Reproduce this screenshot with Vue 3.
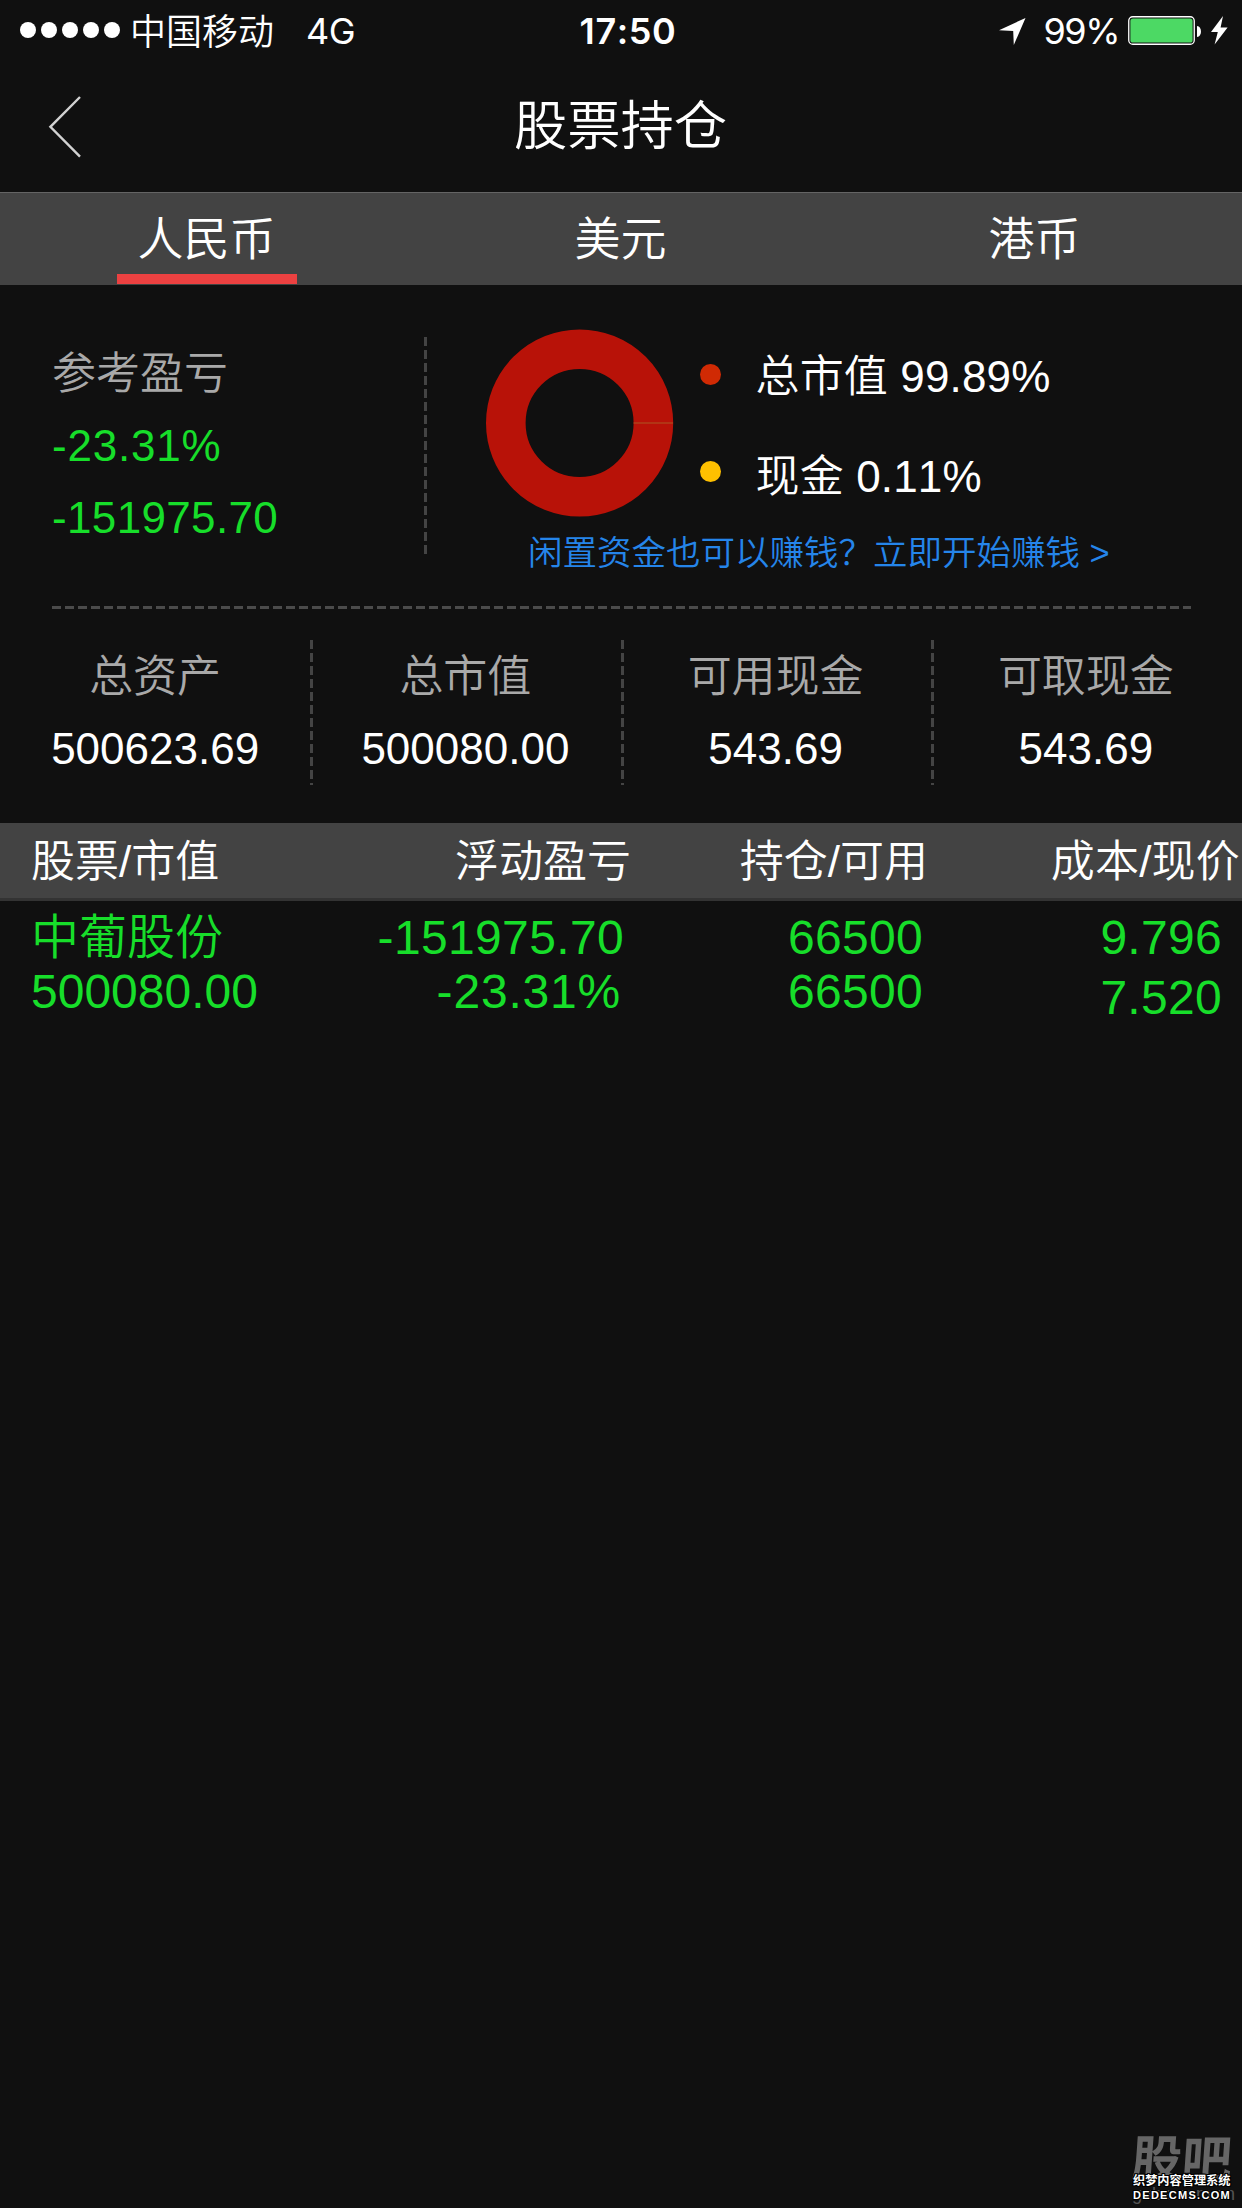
<script setup>
const tabs = [
  { name: '人民币', active: true },
  { name: '美元', active: false },
  { name: '港币', active: false },
]

const legend = [
  { label: '总市值', value: '99.89%', kind: 'stock' },
  { label: '现金', value: '0.11%', kind: 'cash' },
]

const stats = [
  { label: '总资产', value: '500623.69' },
  { label: '总市值', value: '500080.00' },
  { label: '可用现金', value: '543.69' },
  { label: '可取现金', value: '543.69' },
]

const holdings = [
  {
    name: '中葡股份',
    marketValue: '500080.00',
    profit: '-151975.70',
    profitRate: '-23.31%',
    amount: '66500',
    available: '66500',
    cost: '9.796',
    price: '7.520',
  },
]
</script>

<template>
  <div class="screen">
    <header class="status">
      <div class="status-side">
        <span class="signal"><i v-for="n in 5" :key="n"></i></span>
        <span class="carrier">中国移动</span>
        <span class="network">4G</span>
      </div>
      <div class="clock">17:50</div>
      <div class="status-side right">
        <svg class="locate" width="27" height="27" viewBox="0 0 27 27">
          <path d="M26.5 0 L0 12.2 L14.2 13 L14.8 27 Z" fill="#fff" />
        </svg>
        <span class="percent">99%</span>
        <svg class="battery" width="74" height="30" viewBox="0 0 74 30">
          <rect x="0.75" y="0.75" width="65.5" height="27.5" rx="4" fill="none" stroke="#fff" stroke-width="1.3" />
          <rect x="2.4" y="2.4" width="62.2" height="24.2" rx="2.6" fill="#4cd964" />
          <path d="M69 10 C74.3 10.5 74.3 20.5 69 21 Z" fill="#fff" />
        </svg>
        <svg class="bolt" width="17" height="29" viewBox="0 0 17 29">
          <path d="M12 0 L0 16 L6.8 16 L3.6 28.6 L16.6 11.6 L9.6 11.6 Z" fill="#fff" />
        </svg>
      </div>
    </header>

    <nav class="navbar">
      <svg class="back" width="34" height="64" viewBox="0 0 34 64">
        <path d="M32 2 L2.4 31.8 L32 61.6" fill="none" stroke="#d2d2d2" stroke-width="2.4" />
      </svg>
      <h1>股票持仓</h1>
    </nav>

    <div class="tabs">
      <div v-for="tab in tabs" :key="tab.name" class="tab" :class="{ active: tab.active }">
        <span>{{ tab.name }}</span>
      </div>
    </div>

    <section class="overview">
      <div class="profit">
        <div class="label">参考盈亏</div>
        <div class="loss rate">-23.31%</div>
        <div class="loss">-151975.70</div>
      </div>
      <div class="chart">
        <div class="chart-row">
          <svg class="donut" width="188" height="188" viewBox="0 0 188 188">
            <circle cx="93.6" cy="94" r="73.8" fill="none" stroke="#b81208" stroke-width="39.6" />
            <path d="M147.6 94 H187" stroke="#b0401a" stroke-width="1.6" />
          </svg>
          <ul class="legend">
            <li v-for="item in legend" :key="item.label">
              <i :class="item.kind"></i>{{ item.label }} {{ item.value }}
            </li>
          </ul>
        </div>
        <a class="promo">闲置资金也可以赚钱&#xFF1F;立即开始赚钱 &gt;</a>
      </div>
    </section>

    <section class="stats">
      <div v-for="stat in stats" :key="stat.label" class="stat">
        <div class="label">{{ stat.label }}</div>
        <div>{{ stat.value }}</div>
      </div>
    </section>

    <div class="table-head">
      <span class="c1">股票/市值</span>
      <span class="c2">浮动盈亏</span>
      <span class="c3">持仓/可用</span>
      <span class="c4">成本/现价</span>
    </div>
    <div v-for="row in holdings" :key="row.name" class="table-row">
      <div class="c1"><div class="stock-name">{{ row.name }}</div><div>{{ row.marketValue }}</div></div>
      <div class="c2"><div class="loss">{{ row.profit }}</div><div class="loss rate">{{ row.profitRate }}</div></div>
      <div class="c3"><div>{{ row.amount }}</div><div>{{ row.available }}</div></div>
      <div class="c4"><div>{{ row.cost }}</div><div>{{ row.price }}</div></div>
    </div>

    <div class="watermark">
      <div class="brand">股吧</div>
      <div class="domain">guba.com.cn</div>
      <div class="stamp">
        <div class="stamp-cn">织梦内容管理系统</div>
        <div class="stamp-en">DEDECMS.COM</div>
      </div>
    </div>
  </div>
</template>

<style>
body {
  background: #101010;
}
</style>

<style scoped>
.screen {
  position: relative;
  width: 1242px;
  height: 2208px;
  overflow: hidden;
  background: #101010;
  color: #fff;
  font-family: "Liberation Sans", "Noto Sans CJK SC", sans-serif;
  font-size: 44px;
  font-weight: 350;
  font-kerning: none;
  white-space: nowrap;
}

.status {
  display: flex;
  justify-content: space-between;
  height: 62px;
  box-sizing: border-box;
  padding: 0 14px 0 20px;
  line-height: 62px;
  font-family: Inter, "Noto Sans CJK SC", sans-serif;
  font-size: 36px;
}
.status-side {
  display: flex;
  width: 500px;
}
.status-side.right {
  justify-content: flex-end;
}
.signal {
  display: flex;
  gap: 5px;
  margin: 22px 10px 0 0;
}
.signal i {
  width: 16px;
  height: 16px;
  border-radius: 50%;
  background: #fff;
}
.carrier {
  margin-right: 32px;
  line-height: 64px;
}
.network,
.percent {
  font-weight: 400;
}
.network {
  letter-spacing: -0.5px;
}
.clock {
  font-weight: 600;
  letter-spacing: 0.6px;
  margin-left: 8px;
}
.locate {
  margin: 18px 18px 0 0;
}
.percent {
  letter-spacing: -1.5px;
  margin-right: 9px;
}
.battery {
  margin: 16px 9px 0 0;
}
.bolt {
  margin-top: 16px;
}

.navbar {
  display: flex;
  align-items: center;
  height: 130px;
}
.back {
  margin: 0 0 0 48px;
}
.navbar h1 {
  flex: 1;
  margin: 0 83px 0 0;
  text-align: center;
  font-size: 53.3px;
  font-weight: 350;
  line-height: 130px;
}

.tabs {
  display: flex;
  height: 93px;
  box-sizing: border-box;
  border-top: 1px solid #646464;
  background: #434343;
  font-size: 46px;
}
.tab {
  flex: 1;
  display: flex;
  flex-direction: column;
  align-items: center;
  line-height: 92px;
}
.tab span {
  height: 81px;
  margin-right: 1px;
}
.tab.active::after {
  content: "";
  width: 180px;
  height: 10px;
  background: #ec4141;
}

.overview {
  display: flex;
  height: 324px;
  margin: 0 51px 0 52px;
  background: repeating-linear-gradient(90deg, #4b4b4b 0 9px, transparent 9px 13px) bottom / 100% 3px no-repeat;
}
.profit {
  width: 375px;
  height: 217px;
  box-sizing: border-box;
  margin-top: 52px;
  padding-top: 1px;
  line-height: 72px;
  background: repeating-linear-gradient(#444 0 9px, transparent 9px 13px) right / 3px 100% no-repeat;
}
.label {
  color: #a9a9a9;
}
.loss {
  color: #17de2a;
  letter-spacing: 0.35px;
}
.loss.rate {
  letter-spacing: 0.8px;
}
.chart {
  flex: 1;
  padding: 41px 0 0 59px;
}
.chart-row {
  display: flex;
  height: 207px;
}
.donut {
  margin-top: 3px;
}
.legend {
  list-style: none;
  margin: 1px 0 0;
  padding: 0 0 0 26px;
  line-height: 100px;
}
.legend li {
  display: flex;
  align-items: center;
  height: 100px;
  letter-spacing: 0.15px;
}
.legend i {
  width: 21px;
  height: 21px;
  margin: 0 34.5px 5px 0;
  border-radius: 50%;
}
.legend .stock {
  background: #d02a04;
}
.legend .cash {
  margin-bottom: 12px;
  background: #ffc000;
}
.promo {
  display: block;
  margin-left: 42px;
  line-height: 40px;
  font-size: 34.5px;
  color: #2585ea;
}

.stats {
  display: flex;
  height: 145px;
  padding: 31px 1px 38px 0;
  line-height: 72px;
  text-align: center;
}
.stat {
  flex: 1;
  padding-top: 1px;
}
.stat + .stat {
  background: repeating-linear-gradient(#444 0 9px, transparent 9px 13px) left / 3px 100% no-repeat;
}

.table-head,
.table-row {
  display: grid;
  grid-template-columns: 340px 290px 297px 315px;
}
.table-head {
  height: 75px;
  line-height: 77px;
  border-bottom: 3px solid #333;
  background: #434343;
  text-align: right;
}
.table-head .c2,
.table-head .c3 {
  margin-right: -1px;
}
.table-head .c4 {
  padding-right: 2px;
  letter-spacing: 0.2px;
}
.c1 {
  padding-left: 31px;
  text-align: left;
}
.table-row {
  padding-top: 10px;
  font-size: 48px;
  line-height: 54px;
  color: #17de2a;
  text-align: right;
}
.table-row .c2 {
  padding-right: 6px;
}
.table-row .rate {
  padding-right: 3px;
}
.table-row .c3 {
  padding-right: 4px;
  letter-spacing: 0.3px;
}
.table-row .c4 {
  padding-right: 20px;
  margin-top: -3px;
  line-height: 60px;
  letter-spacing: 0.3px;
}
.stock-name {
  height: 54px;
}

.watermark {
  position: absolute;
  right: 6px;
  bottom: 5px;
  width: 104px;
  height: 66px;
}
.brand {
  font-size: 50px;
  font-weight: 700;
  line-height: 46px;
  color: #666;
  transform: skewX(-4deg);
}
.domain {
  position: absolute;
  left: 0;
  bottom: -1px;
  font-size: 18px;
  line-height: 20px;
  color: #555;
}
.stamp {
  position: absolute;
  left: 1px;
  top: 37px;
  font-weight: 700;
  text-shadow: 1px 0 #000, -1px 0 #000, 0 1px #000, 0 -1px #000, 1px 1px #000, -1px -1px #000, 1px -1px #000, -1px 1px #000;
}
.stamp-cn {
  font-size: 12.2px;
  line-height: 15px;
}
.stamp-en {
  font-size: 11px;
  line-height: 12px;
  letter-spacing: 1.3px;
}
</style>
